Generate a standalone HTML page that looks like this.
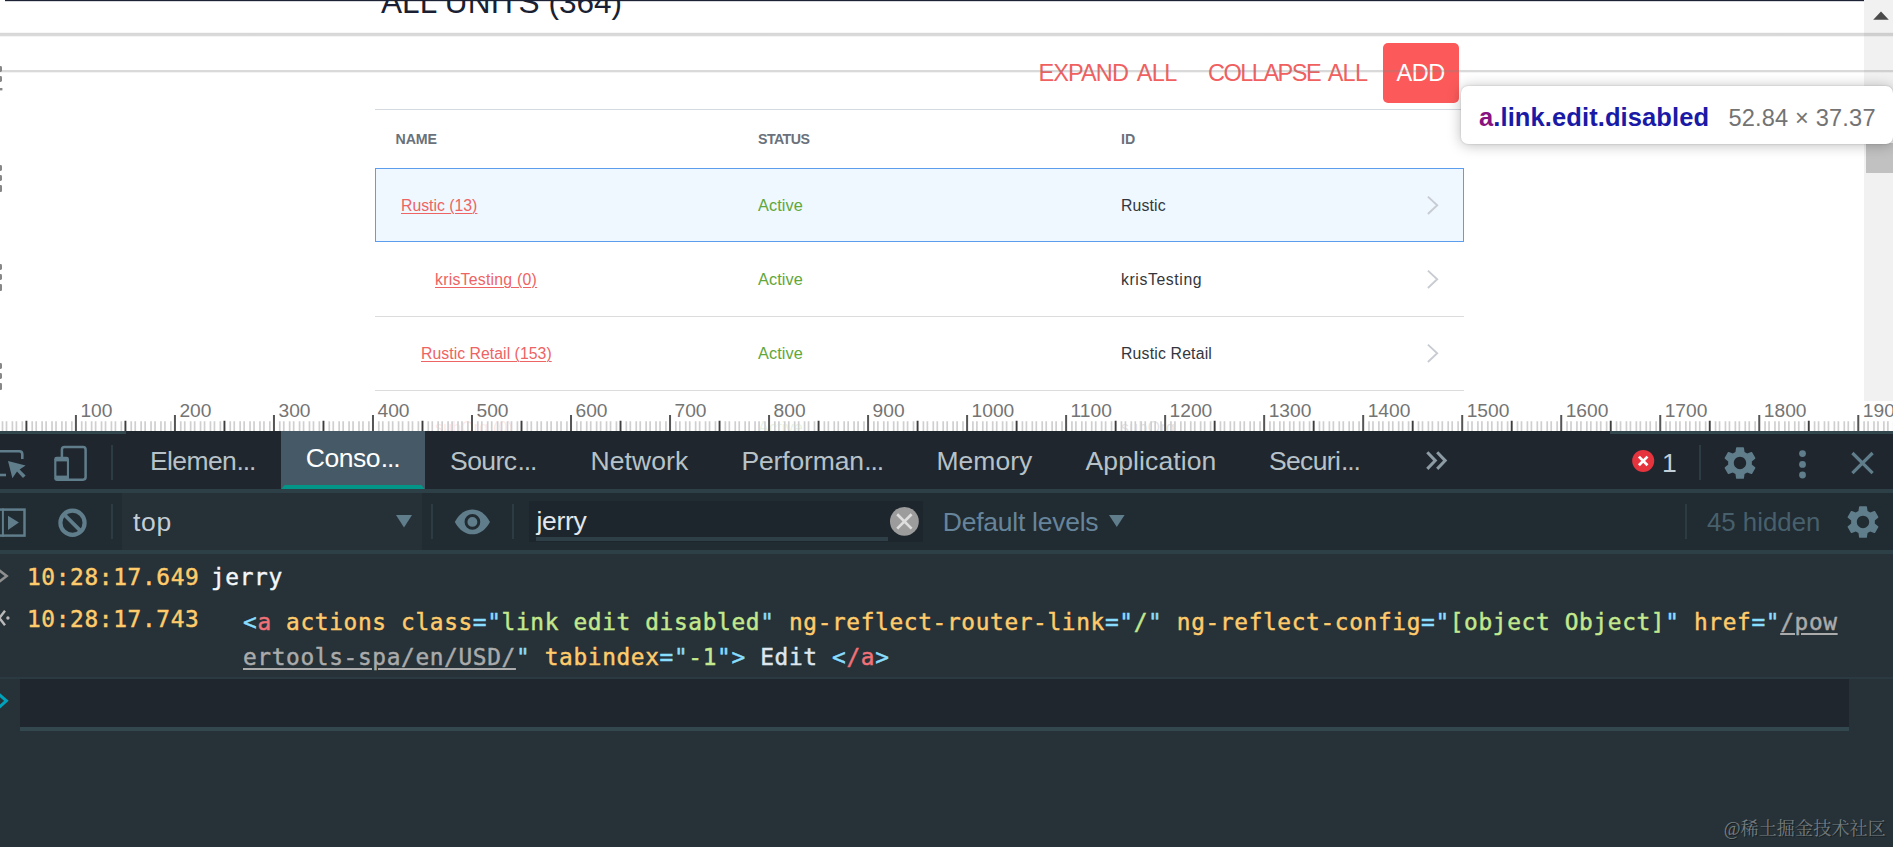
<!DOCTYPE html>
<html lang="en">
<head>
<meta charset="utf-8">
<title>All Units</title>
<style>
*{box-sizing:border-box;margin:0;padding:0}
html,body{width:1893px;height:847px;overflow:hidden;background:#fff}
body{position:relative;font-family:"Liberation Sans","DejaVu Sans",sans-serif;color:#333}
.abs{position:absolute;white-space:nowrap}
/* ---------- page ---------- */
#page{position:absolute;left:0;top:0;width:1893px;height:431px;background:#fff;overflow:hidden}
#topline{left:5px;top:0;width:1859px;height:2px;background:linear-gradient(#1d2235 0,#1d2235 50%,rgba(29,34,53,.22) 51%,rgba(29,34,53,.12) 100%)}
#h1{left:381px;top:-16px;font-size:31.6px;line-height:36px;color:#1a1f33;letter-spacing:0}
#hr1{left:0;top:32px;width:1893px;height:5px;background:linear-gradient(rgba(120,120,120,.06) 0,rgba(120,120,120,.06) 12%,rgba(120,120,120,.3) 22%,rgba(120,120,120,.27) 80%,rgba(120,120,120,.08) 90%,rgba(120,120,120,.04) 100%)}
#hr2{left:0;top:70px;width:1893px;height:3px;background:linear-gradient(rgba(130,130,130,.3) 0,rgba(130,130,130,.3) 66.6%,rgba(130,130,130,.09) 66.7%,rgba(130,130,130,.09) 100%)}
.btn{font-size:23.5px;line-height:30px;color:#f0605f;top:57.5px}
#add{left:1383px;top:42.5px;width:76px;height:60px;background:#fc5a5a;border-radius:5px}
#addt{left:1396.5px;top:57.5px;font-size:23.5px;line-height:30px;color:#fff;letter-spacing:-.4px}
#tbl{left:375px;top:109px;width:1089px;height:330px}
#tbltop{left:0;top:0;width:1089px;height:1px;background:#d5d9e0}
.th{top:22px;font-size:14.2px;font-weight:bold;line-height:16px;color:#6a717b}
.row{left:0;width:1089px;height:74px;border-bottom:1px solid #dcdcdc}
.row.sel{background:#eef8fe;border:1px solid #5c9ded}
.lnk{font-size:15.8px;line-height:20px;color:#ee6363;text-decoration:underline;text-decoration-thickness:1px;text-underline-offset:2px}
.st{font-size:16.3px;line-height:20px;color:#5fa73a;letter-spacing:.1px}
.idt{font-size:15.8px;line-height:20px;color:#33363d}
.lnk,.idt{margin-top:1px}
.chev{width:14px;height:20px;overflow:visible}
/* scrollbar */
#sb{left:1864px;top:0;width:29px;height:431px;background:#f1f1f1}
#sbthumb{left:1866px;top:143px;width:27px;height:30px;background:#c1c1c1}
/* tooltip */
#tip{left:1461px;top:86px;width:432px;height:58px;background:#fff;border-radius:7px;box-shadow:0 1px 14px rgba(0,0,0,.27),0 0 2px rgba(0,0,0,.2)}
#tip b{position:absolute;left:18px;top:15px;letter-spacing:.1px;font-size:25.5px;line-height:32px;color:#1a1aa6;font-weight:bold;white-space:nowrap}
#tip b i{font-style:normal;color:#881280}
#tip span{position:absolute;left:267.5px;top:16px;letter-spacing:.17px;font-size:23.6px;line-height:32px;color:#737373;white-space:nowrap}
/* ruler */
#ruler{left:0;top:401px;width:1893px;height:30px;background:rgba(255,255,255,.86)}
/* ---------- devtools ---------- */
#dt{position:absolute;left:0;top:431px;width:1893px;height:416px;background:#263238}
#tabs{left:0;top:0;width:1893px;height:58px;background:#1f262e}
.tab{top:14px;font-size:26.5px;line-height:32px;color:#b7c2c8}
.el{letter-spacing:-1.1px}
.ic{position:absolute;overflow:visible}
#seltab{left:281px;top:0;width:144px;height:58px;background:#455a66}
.bline{left:0;width:1893px;height:4px;background:#2d3f47}
.vsep{width:2px;background:#2f3d45}
#ctb{left:0;top:62px;width:1893px;height:57px;background:#212b32}
#ctx{left:122px;top:62px;width:300px;height:57px;background:#263037}
#flt{left:529px;top:70px;width:394px;height:41px;background:#1e262d}
#fltu{left:536px;top:106px;width:352px;height:4px;background:#2e3f47}
#prompt{left:20px;top:248px;width:1829px;height:48px;background:#1f262e}
#psep{left:0;top:246px;width:1893px;height:2px;background:#2b3a41}
#promptb{left:20px;top:296px;width:1829px;height:4px;background:#33474e}
.mono{font-family:"DejaVu Sans Mono","Liberation Mono",monospace;font-size:22.8px;letter-spacing:.64px;line-height:35px;white-space:pre;-webkit-text-stroke:.45px currentColor}
.ts{color:#ffcb6b}
.tag{color:#89ddff}.tn{color:#f07178}.an{color:#ffcb6b}.av{color:#c3e88d}.tx{color:#dfe6ee}
.url{color:#ababab;text-decoration:underline;text-decoration-thickness:2.4px;text-underline-offset:2.5px}
#wm{right:7px;top:387.3px;text-shadow:1px 1px 0 rgba(0,0,0,.4);font-family:"Liberation Serif","Noto Serif CJK SC",serif;font-size:18.2px;line-height:22px;color:rgba(255,255,255,.38)}
</style>
</head>
<body>
<div id="page">
  <div class="abs" id="topline"></div>
  <div class="abs" id="h1">ALL UNITS (364)</div>
  <div class="abs btn" style="left:1038.5px;word-spacing:2.3px"><span style="letter-spacing:-.9px">EXPAND</span> <span style="letter-spacing:-.7px">ALL</span></div>
  <div class="abs btn" style="left:1208px;word-spacing:1px"><span style="letter-spacing:-1.5px">COLLAPSE</span> <span style="letter-spacing:-.7px">ALL</span></div>
  <div class="abs" id="add"></div>
  <div class="abs" id="addt">ADD</div>
  
  <div class="abs" id="tbl">
    <div class="abs" id="tbltop"></div>
    <div class="abs th" style="left:20.5px;letter-spacing:-.1px">NAME</div>
    <div class="abs th" style="left:383px;letter-spacing:-.55px">STATUS</div>
    <div class="abs th" style="left:746px">ID</div>

    <div class="abs row sel" style="top:59px">
      <div class="abs lnk" style="left:25px;top:26px">Rustic (13)</div>
      <div class="abs st" style="left:382px;top:26px">Active</div>
      <div class="abs idt" style="left:745px;top:26px;letter-spacing:.15px">Rustic</div>
      <svg class="abs chev" style="left:1050px;top:26px" viewBox="0 0 14 20"><path d="M1.9 1.6 L11.2 10.3 L1.9 19" fill="none" stroke="#c8ccd2" stroke-width="1.9"/></svg>
    </div>
    <div class="abs row" style="top:134px">
      <div class="abs lnk" style="left:60px;top:26px;letter-spacing:.25px">krisTesting (0)</div>
      <div class="abs st" style="left:383px;top:26px">Active</div>
      <div class="abs idt" style="left:746px;top:26px;letter-spacing:.6px">krisTesting</div>
      <svg class="abs chev" style="left:1051px;top:26px" viewBox="0 0 14 20"><path d="M1.9 1.6 L11.2 10.3 L1.9 19" fill="none" stroke="#c8ccd2" stroke-width="1.9"/></svg>
    </div>
    <div class="abs row" style="top:208px">
      <div class="abs lnk" style="left:46px;top:26px;letter-spacing:.04px">Rustic Retail (153)</div>
      <div class="abs st" style="left:383px;top:26px">Active</div>
      <div class="abs idt" style="left:746px;top:26px;letter-spacing:.18px">Rustic Retail</div>
      <svg class="abs chev" style="left:1051px;top:26px" viewBox="0 0 14 20"><path d="M1.9 1.6 L11.2 10.3 L1.9 19" fill="none" stroke="#c8ccd2" stroke-width="1.9"/></svg>
    </div>
    <div class="abs row" style="top:282px;border-bottom:none">
      <div class="abs lnk" style="left:60px;top:26px;letter-spacing:.25px">subOrg (0)</div>
      <div class="abs st" style="left:383px;top:26px">Active</div>
      <div class="abs idt" style="left:746px;top:26px;letter-spacing:.4px">subOrg</div>
    </div>
  </div>

  <svg class="abs" style="left:0;top:60px" width="5" height="340" viewBox="0 0 5 340"><g fill="#6a6a6a" opacity=".8"><rect x="-1" y="6" width="3" height="6" rx="1.4"/><rect x="-1" y="16" width="3" height="6" rx="1.4"/><rect x="-1" y="28" width="3.4" height="2.4"/><rect x="-1" y="105" width="3" height="6" rx="1.4"/><rect x="-1" y="115" width="3" height="6" rx="1.4"/><rect x="-1" y="125" width="3" height="7" rx="1.2"/><rect x="-1" y="204" width="3" height="6" rx="1.4"/><rect x="-1" y="214" width="3" height="6" rx="1.4"/><rect x="-1" y="224" width="3" height="7" rx="1.2"/><rect x="-1" y="303" width="3" height="6" rx="1.4"/><rect x="-1" y="313" width="3" height="6" rx="1.4"/><rect x="-1" y="323" width="3" height="7" rx="1.2"/></g></svg>
  <div class="abs" id="sb"></div>
  <svg class="abs" style="left:1872.6px;top:10.4px" width="16" height="10" viewBox="0 0 16 10"><path d="M0.2 9.8 L8 1.4 L15.8 9.8 Z" fill="#4a4a4a"/></svg>
  <div class="abs" id="sbthumb"></div>
  <div class="abs" id="hr1"></div>
  <div class="abs" id="hr2"></div>

  <div class="abs" id="tip"><b><i>a</i>.link.edit.disabled</b><span>52.84 × 37.37</span></div>

  <div class="abs" id="ruler"><svg width="1893" height="30" viewBox="0 0 1893 30" style="position:absolute;left:0;top:0"><path d="M2.50 20.3V30M6.51 20.3V30M12.41 20.3V30M16.41 20.3V30M22.31 20.3V30M32.21 20.3V30M36.21 20.3V30M42.11 20.3V30M46.11 20.3V30M52.02 20.3V30M56.02 20.3V30M61.92 20.3V30M65.92 20.3V30M71.82 20.3V30M81.72 20.3V30M85.72 20.3V30M91.62 20.3V30M95.62 20.3V30M101.52 20.3V30M105.53 20.3V30M111.43 20.3V30M115.43 20.3V30M121.33 20.3V30M131.23 20.3V30M135.23 20.3V30M141.13 20.3V30M145.13 20.3V30M151.03 20.3V30M155.04 20.3V30M160.94 20.3V30M164.94 20.3V30M170.84 20.3V30M180.74 20.3V30M184.74 20.3V30M190.64 20.3V30M194.64 20.3V30M200.54 20.3V30M204.55 20.3V30M210.45 20.3V30M214.45 20.3V30M220.35 20.3V30M230.25 20.3V30M234.25 20.3V30M240.15 20.3V30M244.15 20.3V30M250.06 20.3V30M254.06 20.3V30M259.96 20.3V30M263.96 20.3V30M269.86 20.3V30M279.76 20.3V30M283.76 20.3V30M289.66 20.3V30M293.66 20.3V30M299.56 20.3V30M303.57 20.3V30M309.47 20.3V30M313.47 20.3V30M319.37 20.3V30M329.27 20.3V30M333.27 20.3V30M339.17 20.3V30M343.17 20.3V30M349.07 20.3V30M353.08 20.3V30M358.98 20.3V30M362.98 20.3V30M368.88 20.3V30M378.78 20.3V30M382.78 20.3V30M388.68 20.3V30M392.68 20.3V30M398.58 20.3V30M402.59 20.3V30M408.49 20.3V30M412.49 20.3V30M418.39 20.3V30M428.29 20.3V30M432.29 20.3V30M438.19 20.3V30M442.19 20.3V30M448.09 20.3V30M452.10 20.3V30M458.00 20.3V30M462.00 20.3V30M467.90 20.3V30M477.80 20.3V30M481.80 20.3V30M487.70 20.3V30M491.70 20.3V30M497.61 20.3V30M501.61 20.3V30M507.51 20.3V30M511.51 20.3V30M517.41 20.3V30M527.31 20.3V30M531.31 20.3V30M537.21 20.3V30M541.21 20.3V30M547.12 20.3V30M551.12 20.3V30M557.02 20.3V30M561.02 20.3V30M566.92 20.3V30M576.82 20.3V30M580.82 20.3V30M586.72 20.3V30M590.72 20.3V30M596.62 20.3V30M600.63 20.3V30M606.53 20.3V30M610.53 20.3V30M616.43 20.3V30M626.33 20.3V30M630.33 20.3V30M636.23 20.3V30M640.23 20.3V30M646.13 20.3V30M650.14 20.3V30M656.04 20.3V30M660.04 20.3V30M665.94 20.3V30M675.84 20.3V30M679.84 20.3V30M685.74 20.3V30M689.74 20.3V30M695.64 20.3V30M699.65 20.3V30M705.55 20.3V30M709.55 20.3V30M715.45 20.3V30M725.35 20.3V30M729.35 20.3V30M735.25 20.3V30M739.25 20.3V30M745.15 20.3V30M749.16 20.3V30M755.06 20.3V30M759.06 20.3V30M764.96 20.3V30M774.86 20.3V30M778.86 20.3V30M784.76 20.3V30M788.76 20.3V30M794.66 20.3V30M798.67 20.3V30M804.57 20.3V30M808.57 20.3V30M814.47 20.3V30M824.37 20.3V30M828.37 20.3V30M834.27 20.3V30M838.27 20.3V30M844.17 20.3V30M848.18 20.3V30M854.08 20.3V30M858.08 20.3V30M863.98 20.3V30M873.88 20.3V30M877.88 20.3V30M883.78 20.3V30M887.78 20.3V30M893.68 20.3V30M897.69 20.3V30M903.59 20.3V30M907.59 20.3V30M913.49 20.3V30M923.39 20.3V30M927.39 20.3V30M933.29 20.3V30M937.29 20.3V30M943.19 20.3V30M947.20 20.3V30M953.10 20.3V30M957.10 20.3V30M963.00 20.3V30M972.90 20.3V30M976.90 20.3V30M982.80 20.3V30M986.80 20.3V30M992.70 20.3V30M996.71 20.3V30M1002.61 20.3V30M1006.61 20.3V30M1012.51 20.3V30M1022.41 20.3V30M1026.41 20.3V30M1032.31 20.3V30M1036.31 20.3V30M1042.21 20.3V30M1046.22 20.3V30M1052.12 20.3V30M1056.12 20.3V30M1062.02 20.3V30M1071.92 20.3V30M1075.92 20.3V30M1081.82 20.3V30M1085.82 20.3V30M1091.72 20.3V30M1095.73 20.3V30M1101.63 20.3V30M1105.63 20.3V30M1111.53 20.3V30M1121.43 20.3V30M1125.43 20.3V30M1131.33 20.3V30M1135.33 20.3V30M1141.23 20.3V30M1145.24 20.3V30M1151.14 20.3V30M1155.14 20.3V30M1161.04 20.3V30M1170.94 20.3V30M1174.94 20.3V30M1180.84 20.3V30M1184.84 20.3V30M1190.74 20.3V30M1194.75 20.3V30M1200.65 20.3V30M1204.65 20.3V30M1210.55 20.3V30M1220.45 20.3V30M1224.45 20.3V30M1230.35 20.3V30M1234.35 20.3V30M1240.25 20.3V30M1244.26 20.3V30M1250.16 20.3V30M1254.16 20.3V30M1260.06 20.3V30M1269.96 20.3V30M1273.96 20.3V30M1279.86 20.3V30M1283.86 20.3V30M1289.76 20.3V30M1293.77 20.3V30M1299.67 20.3V30M1303.67 20.3V30M1309.57 20.3V30M1319.47 20.3V30M1323.47 20.3V30M1329.37 20.3V30M1333.37 20.3V30M1339.27 20.3V30M1343.28 20.3V30M1349.18 20.3V30M1353.18 20.3V30M1359.08 20.3V30M1368.98 20.3V30M1372.98 20.3V30M1378.88 20.3V30M1382.88 20.3V30M1388.78 20.3V30M1392.79 20.3V30M1398.69 20.3V30M1402.69 20.3V30M1408.59 20.3V30M1418.49 20.3V30M1422.49 20.3V30M1428.39 20.3V30M1432.39 20.3V30M1438.29 20.3V30M1442.30 20.3V30M1448.20 20.3V30M1452.20 20.3V30M1458.10 20.3V30M1468.00 20.3V30M1472.00 20.3V30M1477.90 20.3V30M1481.90 20.3V30M1487.81 20.3V30M1491.81 20.3V30M1497.71 20.3V30M1501.71 20.3V30M1507.61 20.3V30M1517.51 20.3V30M1521.51 20.3V30M1527.41 20.3V30M1531.41 20.3V30M1537.32 20.3V30M1541.32 20.3V30M1547.22 20.3V30M1551.22 20.3V30M1557.12 20.3V30M1567.02 20.3V30M1571.02 20.3V30M1576.92 20.3V30M1580.92 20.3V30M1586.83 20.3V30M1590.83 20.3V30M1596.73 20.3V30M1600.73 20.3V30M1606.63 20.3V30M1616.53 20.3V30M1620.53 20.3V30M1626.43 20.3V30M1630.43 20.3V30M1636.34 20.3V30M1640.34 20.3V30M1646.24 20.3V30M1650.24 20.3V30M1656.14 20.3V30M1666.04 20.3V30M1670.04 20.3V30M1675.94 20.3V30M1679.94 20.3V30M1685.85 20.3V30M1689.85 20.3V30M1695.75 20.3V30M1699.75 20.3V30M1705.65 20.3V30M1715.55 20.3V30M1719.55 20.3V30M1725.45 20.3V30M1729.45 20.3V30M1735.36 20.3V30M1739.36 20.3V30M1745.26 20.3V30M1749.26 20.3V30M1755.16 20.3V30M1765.06 20.3V30M1769.06 20.3V30M1774.96 20.3V30M1778.96 20.3V30M1784.87 20.3V30M1788.87 20.3V30M1794.77 20.3V30M1798.77 20.3V30M1804.67 20.3V30M1814.57 20.3V30M1818.57 20.3V30M1824.47 20.3V30M1828.47 20.3V30M1834.38 20.3V30M1838.38 20.3V30M1844.28 20.3V30M1848.28 20.3V30M1854.18 20.3V30M1864.08 20.3V30M1868.08 20.3V30M1873.98 20.3V30M1877.98 20.3V30M1883.88 20.3V30M1887.89 20.3V30M1893.79 20.3V30" stroke="#cfcfcf" stroke-width="1.7" fill="none"/><path d="M26.41 19.8V30M125.43 19.8V30M224.45 19.8V30M323.47 19.8V30M422.49 19.8V30M521.51 19.8V30M620.53 19.8V30M719.55 19.8V30M818.57 19.8V30M917.59 19.8V30M1016.61 19.8V30M1115.63 19.8V30M1214.65 19.8V30M1313.67 19.8V30M1412.69 19.8V30M1511.71 19.8V30M1610.73 19.8V30M1709.75 19.8V30M1808.77 19.8V30" stroke="#3e3e3e" stroke-width="1.9" fill="none"/><path d="M75.92 14V30M174.94 14V30M273.96 14V30M372.98 14V30M472.00 14V30M571.02 14V30M670.04 14V30M769.06 14V30M868.08 14V30M967.10 14V30M1066.12 14V30M1165.14 14V30M1264.16 14V30M1363.18 14V30M1462.20 14V30M1561.22 14V30M1660.24 14V30M1759.26 14V30M1858.28 14V30" stroke="#555" stroke-width="2" fill="none"/><g font-family="Liberation Sans, sans-serif" font-size="19.2" fill="#747474"><text x="80.4" y="15.7">100</text><text x="179.4" y="15.7">200</text><text x="278.5" y="15.7">300</text><text x="377.5" y="15.7">400</text><text x="476.5" y="15.7">500</text><text x="575.5" y="15.7">600</text><text x="674.5" y="15.7">700</text><text x="773.6" y="15.7">800</text><text x="872.6" y="15.7">900</text><text x="971.6" y="15.7">1000</text><text x="1070.6" y="15.7">1100</text><text x="1169.6" y="15.7">1200</text><text x="1268.7" y="15.7">1300</text><text x="1367.7" y="15.7">1400</text><text x="1466.7" y="15.7">1500</text><text x="1565.7" y="15.7">1600</text><text x="1664.7" y="15.7">1700</text><text x="1763.8" y="15.7">1800</text><text x="1862.8" y="15.7">1900</text></g></svg></div>
</div>

<div id="dt">
  <div class="abs" id="tabs"></div>
  <div class="abs" style="left:0;top:0;width:126px;height:3px;background:#33474f"></div>
  <div class="abs" style="left:1610px;top:0;width:283px;height:3px;background:#33474f"></div>
  <div class="abs" id="seltab"></div>
  <svg class="ic" style="left:281px;top:53.8px" width="144" height="4.2" viewBox="0 0 144 4.2"><path d="M0 4.2 L3.4 0 H140.6 L144 4.2 Z" fill="#039688"/></svg>

  <!-- inspect icon -->
  <svg class="ic" style="left:0;top:14px" width="30" height="36" viewBox="0 0 30 36">
    <path d="M-2 6.2 H19.3 Q22.3 6.2 22.3 9.2 V14" fill="none" stroke="#607d8b" stroke-width="2.6"/>
    <path d="M-2 30 H6" fill="none" stroke="#607d8b" stroke-width="2.6"/>
    <path d="M8 16 L25.6 20.4 L19.6 24.4 L25.6 30.6 L23 33 L17 26.6 L12.4 33.2 Z" fill="#607d8b"/>
  </svg>
  <!-- device icon -->
  <svg class="ic" style="left:52px;top:12px" width="38" height="40" viewBox="0 0 38 40">
    <rect x="9.9" y="4.1" width="23.7" height="32.6" rx="2.6" fill="none" stroke="#607d8b" stroke-width="2.5"/>
    <rect x="2.2" y="13.8" width="14.8" height="24.1" rx="2.4" fill="#607d8b"/>
    <rect x="4.4" y="18.4" width="10.5" height="14.2" fill="#1f262e"/>
  </svg>
  <div class="abs vsep" style="left:111px;top:14px;height:35px;background:#2d3b43"></div>

  <div class="abs tab" style="left:150px;letter-spacing:-.6px">Elemen<span class="el" style="margin-left:.2px">...</span></div>
  <div class="abs tab" style="left:305.7px;top:10.8px;color:#fff;letter-spacing:-.42px">Conso<span class="el" style="margin-left:.5px">...</span></div>
  <div class="abs tab" style="left:450px;letter-spacing:-.55px">Sourc<span class="el" style="margin-left:1px">...</span></div>
  <div class="abs tab" style="left:590.5px;letter-spacing:.1px">Network</div>
  <div class="abs tab" style="left:741.5px;letter-spacing:-.15px">Performan<span class="el" style="margin-left:.4px">...</span></div>
  <div class="abs tab" style="left:936.5px">Memory</div>
  <div class="abs tab" style="left:1085.5px;letter-spacing:.12px">Application</div>
  <div class="abs tab" style="left:1269px;letter-spacing:-.65px">Securi<span class="el" style="margin-left:.8px">...</span></div>

  <!-- more tabs chevrons -->
  <svg class="ic" style="left:1424px;top:19px" width="24" height="22" viewBox="0 0 24 22">
    <path d="M3.3 2.3 L11.3 10.6 L3.3 18.9 M13.2 2.3 L21.2 10.6 L13.2 18.9" fill="none" stroke="#8d9ba5" stroke-width="3"/>
  </svg>
  <!-- error badge -->
  <svg class="ic" style="left:1631px;top:18px" width="24" height="24" viewBox="0 0 24 24">
    <circle cx="12.2" cy="11.9" r="11" fill="#e6343f"/>
    <path d="M7.9 7.6 L16.5 16.2 M16.5 7.6 L7.9 16.2" stroke="#fff" stroke-width="2.7" fill="none"/>
  </svg>
  <div class="abs tab" style="left:1662px;top:16px;color:#c3ced6">1</div>
  <div class="abs vsep" style="left:1699px;top:14px;height:35px;background:#2d3b43"></div>
  <!-- gear 1 -->
  <svg class="ic" style="left:1721.4px;top:13.2px" width="38" height="38" viewBox="0 0 24 24"><path fill="#607d8b" d="M19.43 12.98c.04-.32.07-.64.07-.98s-.03-.66-.07-.98l2.11-1.65c.19-.15.24-.42.12-.64l-2-3.46c-.12-.22-.39-.3-.61-.22l-2.49 1c-.52-.4-1.08-.73-1.69-.98l-.38-2.65C14.46 2.18 14.25 2 14 2h-4c-.25 0-.46.18-.49.42l-.38 2.65c-.61.25-1.17.59-1.69.98l-2.49-1c-.23-.09-.49 0-.61.22l-2 3.46c-.13.22-.07.49.12.64l2.11 1.65c-.04.32-.07.65-.07.98s.03.66.07.98l-2.11 1.65c-.19.15-.24.42-.12.64l2 3.46c.12.22.39.3.61.22l2.49-1c.52.4 1.08.73 1.69.98l.38 2.65c.03.24.24.42.49.42h4c.25 0 .46-.18.49-.42l.38-2.65c.61-.25 1.17-.59 1.69-.98l2.49 1c.23.09.49 0 .61-.22l2-3.46c.12-.22.07-.49-.12-.64l-2.11-1.65zM12 15.9c-2.15 0-3.9-1.75-3.9-3.9s1.75-3.9 3.9-3.9 3.9 1.75 3.9 3.9-1.75 3.9-3.9 3.9z"/></svg>
  <!-- kebab -->
  <svg class="ic" style="left:1797px;top:18px" width="12" height="32" viewBox="0 0 12 32"><circle cx="5.5" cy="4.6" r="3.4" fill="#607d8b"/><circle cx="5.5" cy="15.4" r="3.4" fill="#607d8b"/><circle cx="5.5" cy="26" r="3.4" fill="#607d8b"/></svg>
  <!-- close -->
  <svg class="ic" style="left:1850px;top:20px" width="26" height="26" viewBox="0 0 26 26"><path d="M2.4 2 L22.6 22.2 M22.6 2 L2.4 22.2" stroke="#607d8b" stroke-width="3.2" fill="none"/></svg>

  <div class="abs bline" style="top:58px"></div>
  <div class="abs" id="ctb"></div>
  <div class="abs" id="ctx"></div>
  <div class="abs" id="flt"></div>
  <div class="abs" id="fltu"></div>

  <!-- sidebar toggle / play icon -->
  <svg class="ic" style="left:0;top:76px" width="28" height="32" viewBox="0 0 28 32">
    <rect x="-3" y="2.6" width="27.5" height="26" fill="none" stroke="#607d8b" stroke-width="2.5"/>
    <path d="M2.9 1.4 V29.8" stroke="#607d8b" stroke-width="2" fill="none"/>
    <path d="M8 8.7 L18.9 15.6 L8 22.9 Z" fill="#607d8b"/>
  </svg>
  <!-- clear console -->
  <svg class="ic" style="left:56px;top:75px" width="34" height="34" viewBox="0 0 34 34">
    <circle cx="16.5" cy="16.8" r="12.1" fill="none" stroke="#607d8b" stroke-width="4.2"/>
    <path d="M8.2 8.5 L24.8 25.1" stroke="#607d8b" stroke-width="3.8" fill="none"/>
  </svg>
  <div class="abs vsep" style="left:111px;top:73px;height:35px;background:#2d3b43"></div>
  <div class="abs tab" style="left:133px;top:75px;color:#c4ced5;letter-spacing:.7px">top</div>
  <svg class="ic" style="left:396px;top:84px" width="16" height="13" viewBox="0 0 16 13"><path d="M0 0 H16 L8 12.4 Z" fill="#607d8b"/></svg>
  <div class="abs vsep" style="left:431px;top:73px;height:35px;background:#2d3b43"></div>
  <!-- eye -->
  <svg class="ic" style="left:454px;top:78px" width="37" height="26" viewBox="0 0 37 26">
    <path d="M0.8 12.9 C6 3.8 12 0.6 18.4 0.6 C24.8 0.6 30.8 3.8 36 12.9 C30.8 22 24.8 25.2 18.4 25.2 C12 25.2 6 22 0.8 12.9 Z" fill="#607d8b"/>
    <circle cx="18.4" cy="12.9" r="6.4" fill="none" stroke="#212b32" stroke-width="2.9"/>
  </svg>
  <div class="abs vsep" style="left:512px;top:73px;height:35px;background:#2d3b43"></div>
  <div class="abs tab" style="left:536.5px;top:74px;color:#e3e8ec;letter-spacing:-.3px">jerry</div>
  <!-- clear filter -->
  <svg class="ic" style="left:889px;top:75px" width="31" height="31" viewBox="0 0 31 31">
    <circle cx="15.4" cy="15.4" r="14.4" fill="#9c9c9c"/>
    <path d="M8.2 8.2 L22.6 22.6 M22.6 8.2 L8.2 22.6" stroke="#dedede" stroke-width="2.7" fill="none"/>
  </svg>
  <div class="abs tab" style="left:942.8px;top:75px;color:#67859a;letter-spacing:-.25px">Default levels</div>
  <svg class="ic" style="left:1109px;top:84px" width="16" height="13" viewBox="0 0 16 13"><path d="M0 0 H15.6 L7.8 12 Z" fill="#607d8b"/></svg>
  <div class="abs vsep" style="left:1685px;top:73px;height:35px;background:#2d3b43"></div>
  <div class="abs tab" style="left:1707px;top:75px;font-size:25.8px;color:#48606c">45 hidden</div>
  <!-- gear 2 -->
  <svg class="ic" style="left:1843.5px;top:71.5px" width="38" height="38" viewBox="0 0 24 24"><path fill="#607d8b" d="M19.43 12.98c.04-.32.07-.64.07-.98s-.03-.66-.07-.98l2.11-1.65c.19-.15.24-.42.12-.64l-2-3.46c-.12-.22-.39-.3-.61-.22l-2.49 1c-.52-.4-1.08-.73-1.69-.98l-.38-2.65C14.46 2.18 14.25 2 14 2h-4c-.25 0-.46.18-.49.42l-.38 2.65c-.61.25-1.17.59-1.69.98l-2.49-1c-.23-.09-.49 0-.61.22l-2 3.46c-.13.22-.07.49.12.64l2.11 1.65c-.04.32-.07.65-.07.98s.03.66.07.98l-2.11 1.65c-.19.15-.24.42-.12.64l2 3.46c.12.22.39.3.61.22l2.49-1c.52.4 1.08.73 1.69.98l.38 2.65c.03.24.24.42.49.42h4c.25 0 .46-.18.49-.42l.38-2.65c.61-.25 1.17-.59 1.69-.98l2.49 1c.23.09.49 0 .61-.22l2-3.46c.12-.22.07-.49-.12-.64l-2.11-1.65zM12 15.9c-2.15 0-3.9-1.75-3.9-3.9s1.75-3.9 3.9-3.9 3.9 1.75 3.9 3.9-1.75 3.9-3.9 3.9z"/></svg>
  <div class="abs bline" style="top:119px"></div>

  <!-- console rows -->
  <svg class="ic" style="left:0;top:136px" width="10" height="18" viewBox="0 0 10 18"><path d="M-3 1.6 L6.6 9 L-3 16.4" fill="none" stroke="#8f8f8f" stroke-width="2.6"/></svg>
  <svg class="ic" style="left:0;top:178px" width="12" height="18" viewBox="0 0 12 18"><path d="M5 1.8 L-0.6 9 L5 16.2" fill="none" stroke="#b9b9b9" stroke-width="2.4"/><circle cx="7.9" cy="9" r="1.7" fill="#b9b9b9"/></svg>
  <div class="abs mono ts" style="left:27px;top:129.3px">10:28:17.649</div>
  <div class="abs mono tx" style="left:211px;top:129.3px;color:#f4f7fa">jerry</div>
  <div class="abs mono ts" style="left:27px;top:171.3px">10:28:17.743</div>
  <div class="abs mono" style="left:243px;top:174.3px"><span class="tag">&lt;</span><span class="tn">a</span><span class="an"> actions class</span><span class="tag">="</span><span class="av">link edit disabled</span><span class="tag">"</span><span class="an"> ng-reflect-router-link</span><span class="tag">="</span><span class="av">/</span><span class="tag">"</span><span class="an"> ng-reflect-config</span><span class="tag">="</span><span class="av">[object Object]</span><span class="tag">"</span><span class="an"> href</span><span class="tag">="</span><span class="url">/pow</span></div>
  <div class="abs mono" style="left:243px;top:209.4px"><span class="url">ertools-spa/en/USD/</span><span class="tag">"</span><span class="an"> tabindex</span><span class="tag">="</span><span class="av">-1</span><span class="tag">"&gt;</span><span class="tx"> Edit </span><span class="tag">&lt;</span><span class="tn">/a</span><span class="tag">&gt;</span></div>

  <div class="abs" id="psep"></div>
  <div class="abs" id="prompt"></div>
  <div class="abs" id="promptb"></div>
  <svg class="ic" style="left:0;top:261px" width="12" height="18" viewBox="0 0 12 18"><path d="M-2 1.4 L6.4 8.8 L-2 16.2" fill="none" stroke="#00a1ba" stroke-width="3"/></svg>
  <div class="abs" id="wm">@稀土掘金技术社区</div>
</div>
</body>
</html>
